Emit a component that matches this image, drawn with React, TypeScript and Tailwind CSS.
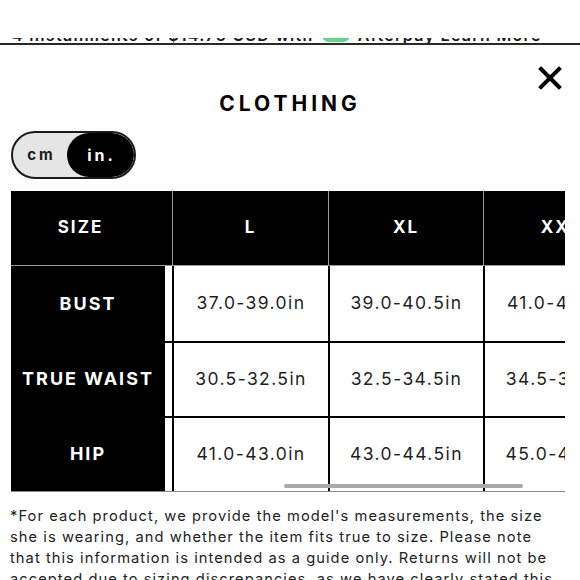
import React from 'react';

const sizes = ['L', 'XL', 'XXL'];

const rows = [
  { label: 'BUST', values: ['37.0-39.0in', '39.0-40.5in', '41.0-42.5in'] },
  { label: 'TRUE WAIST', values: ['30.5-32.5in', '32.5-34.5in', '34.5-36.5in'] },
  { label: 'HIP', values: ['41.0-43.0in', '43.0-44.5in', '45.0-46.5in'] },
];

const widths = ['w-[156px]', 'w-[155px]', 'w-[155px]'];

const SizeChart: React.FC<{}> = () => {
  return (
    <div className="relative w-[580px] h-[580px] overflow-hidden bg-white text-[#1a1a1a] font-['Inter',sans-serif]">
      {/* promo bar, mostly scrolled out of view */}
      <div className="h-[38px]" />
      <div className="h-[5px] overflow-hidden px-[12px]">
        <div className="-mt-[11px] leading-[16px] text-[16px] font-semibold tracking-[1.3px] whitespace-nowrap flex items-center gap-[8px]">
          <span>4 installments of $14.75 USD with</span>
          <span className="inline-block w-[28px] h-[13px] rounded-full bg-[#6fd08a]" />
          <span>Afterpay Learn More</span>
        </div>
      </div>
      <div className="h-[2px] bg-[#2a2a2a]" />

      <button className="absolute right-[18px] top-[66px] w-[24px] h-[24px] text-black">
        <svg viewBox="0 0 24 24" className="w-full h-full" fill="none" stroke="currentColor" strokeWidth="4" strokeLinecap="square">
          <path d="M3 3L21 21M21 3L3 21" />
        </svg>
      </button>

      <h2 className="mt-[47px] text-center text-[21px] leading-[24px] font-bold tracking-[4px] text-black">CLOTHING</h2>

      <div className="ml-[11px] mt-[15px] w-[125px] h-[48px] rounded-full border-2 border-[#1a1a1a] bg-[#e5e5e5] flex items-center overflow-hidden">
        <span className="w-[54px] text-center text-[15px] font-bold tracking-[3px] pl-[3px]">cm</span>
        <span className="flex-1 h-full rounded-full bg-black text-white text-[16px] font-bold tracking-[3px] flex items-center justify-center pl-[2px]">in.</span>
      </div>

      <div className="relative ml-[11px] mt-[12px] w-[554px] overflow-hidden border-b border-[#8a8a8a]">
        <div className="w-max">
          <div className="flex h-[75px] bg-black text-white font-bold text-[17px] tracking-[2px] border-b border-[#9a9a9a]">
            <div className="w-[162px] border-r border-[#9a9a9a] flex items-center justify-center pr-[22px]">SIZE</div>
            {sizes.map((s, i) => (
              <div key={s} className={`${widths[i]} border-r border-[#9a9a9a] flex items-center justify-center`}>
                {s}
              </div>
            ))}
          </div>
          {rows.map((row, r) => (
            <div key={row.label} className="flex h-[75px]">
              <div className="w-[154px] bg-black text-white font-bold text-[18px] tracking-[2px] flex items-center justify-center">
                {row.label}
              </div>
              <div className={`flex ${r > 0 ? 'border-t-2 border-black' : ''}`}>
                <div className="w-[7px] bg-white" />
                {row.values.map((v, i) => (
                  <div
                    key={i}
                    className={`${widths[i]} border-l-2 border-black flex items-center justify-center text-[17.5px] tracking-[1.4px] text-[#1f1f1f]`}
                  >
                    {v}
                  </div>
                ))}
              </div>
            </div>
          ))}
        </div>
        <div className="absolute left-[273px] bottom-[3px] w-[239px] h-[4px] rounded-full bg-[#a8a8a8]" />
      </div>

      <p className="mt-[14px] pl-[10px] w-[562px] text-[14.7px] leading-[21px] tracking-[1.05px] text-[#222]">
        *For each product, we provide the model's measurements, the size she is wearing, and whether the item fits true to size. Please note that this information is intended as a guide only. Returns will not be accepted due to sizing discrepancies, as we have clearly stated this
      </p>
    </div>
  );
};

export default function App() {
  return <SizeChart />;
}
